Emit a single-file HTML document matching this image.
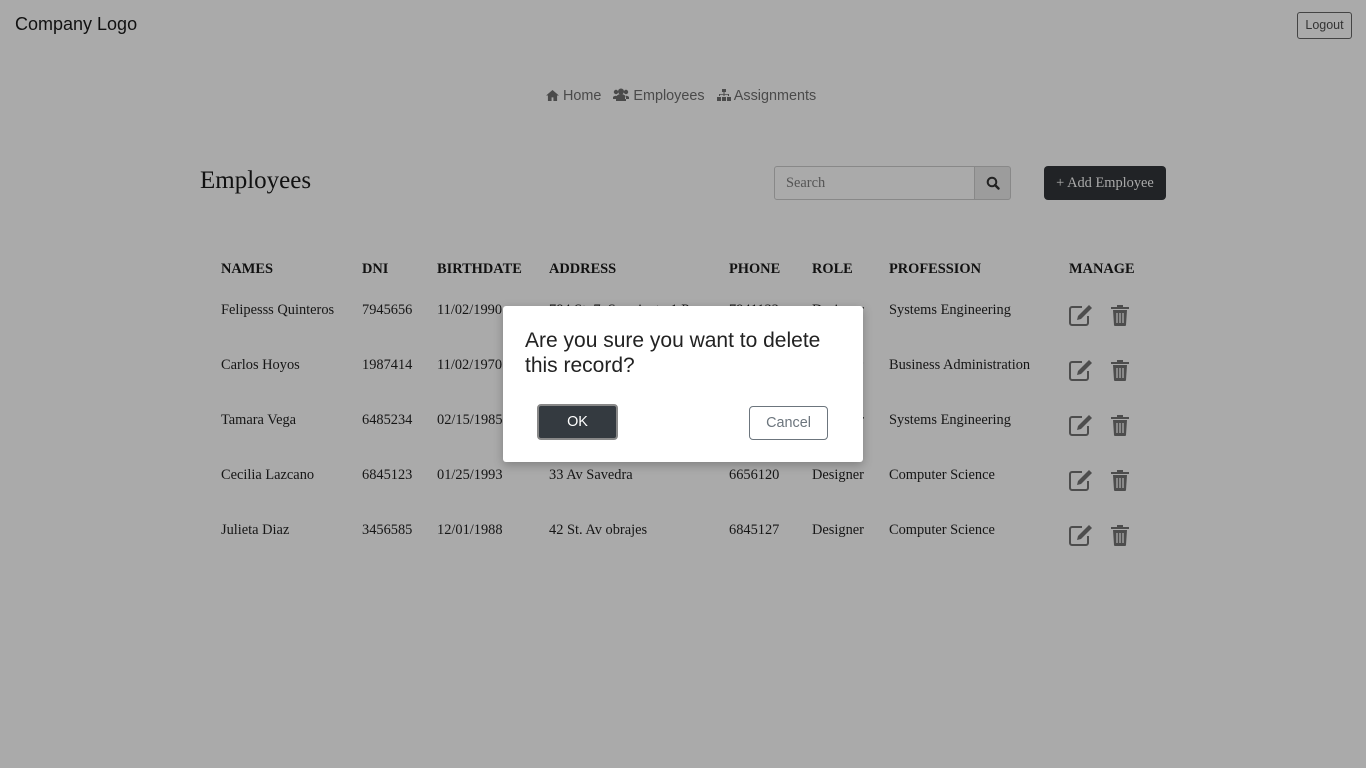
<!DOCTYPE html>
<html><head><style>
body{margin:0;width:1366px;height:768px;background:#aaaaaa;font-family:"Liberation Serif",serif;color:#161616;position:relative;overflow:hidden}
.a{position:absolute;white-space:nowrap}
.logo{left:15px;top:14px;font:18px "Liberation Sans",sans-serif;color:#111}
.logout{left:1297px;top:12px;width:53px;height:25px;border:1px solid #444;border-radius:3px;font:12.5px "Liberation Sans",sans-serif;color:#333;text-align:center;line-height:25px}
.nav{top:88px;font:14.4px "Liberation Sans",sans-serif;color:#4a4a4a}
.nav span{margin-right:12px}
h1{position:absolute;left:200px;top:167px;margin:0;font-weight:normal;font-size:25px;color:#111}
.search{left:774px;top:166px;border:1px solid #888;border-radius:3px 0 0 3px;font-size:14.4px;color:#555;line-height:33px;padding-left:11px;box-sizing:border-box;width:201px;height:34px}
.sbtn{left:974px;top:166px;width:37px;height:34px;background:#9c9c9c;border:1px solid #888;box-sizing:border-box;border-radius:0 3px 3px 0}
.add{left:1044px;top:166px;width:122px;height:34px;background:#212326;border-radius:4px;color:#aaa;font-size:14.4px;text-align:center;line-height:34px}
.h{top:261px;font-weight:bold;font-size:14.4px;color:#111}
.c{font-size:14.4px}
.modal{left:503px;top:306px;width:360px;height:156px;background:#fff;border-radius:3px;box-shadow:0 3px 10px rgba(0,0,0,.25)}
.q{left:22px;top:22px;font:21px/25px "Liberation Sans",sans-serif;color:#222;white-space:normal;width:315px}
.ok{left:34px;top:98px;width:81px;height:36px;background:#343a40;border:2px solid #888;border-radius:4px;box-sizing:border-box;color:#fff;font:14.4px "Liberation Sans",sans-serif;text-align:center;line-height:33px}
.cancel{left:246px;top:100px;width:79px;height:34px;border:1px solid #6c757d;border-radius:4px;box-sizing:border-box;color:#6c757d;font:14.4px "Liberation Sans",sans-serif;text-align:center;line-height:33px}
</style></head><body>
<div class="a logo">Company Logo</div>
<div class="a logout">Logout</div>
<div class="a nav" style="left:546px">
<span><svg width="13" height="11" viewBox="0 0 14 12" style="vertical-align:-1px"><path d="M7 0L0 6h2v6h4V8h2v4h4V6h2z" fill="#4a4a4a"/></svg> Home</span><span><svg width="16" height="13" viewBox="0 0 16 13" style="vertical-align:-1px"><circle cx="8" cy="3.5" r="3" fill="#4a4a4a"/><circle cx="3" cy="4" r="2.2" fill="#4a4a4a"/><circle cx="13" cy="4" r="2.2" fill="#4a4a4a"/><path d="M3 13v-3a5 4 0 0 1 10 0v3z M0 11v-2a3 2 0 0 1 4-1v3z M16 11v-2a3 2 0 0 0-4-1v3z" fill="#4a4a4a"/></svg> Employees</span><span><svg width="14" height="12" viewBox="0 0 14 12" style="vertical-align:-1px"><path d="M5 0h4v3H5zM6.5 3h1v2H12v2h-1V5.8H7.5V7h-1V5.8H3V7H2V5H6.5z M0 8h4v4H0zM5 8h4v4H5zM10 8h4v4h-4z" fill="#4a4a4a"/></svg> Assignments</span></div>
<h1>Employees</h1>
<div class="a search">Search</div>
<div class="a sbtn"><svg width="14" height="14" viewBox="0 0 14 14" style="position:absolute;left:11px;top:9px"><circle cx="6" cy="6" r="4.3" stroke="#222" stroke-width="2" fill="none"/><path d="M9 9l3.5 3.5" stroke="#222" stroke-width="2.4" stroke-linecap="round"/></svg></div>
<div class="a add">+ Add Employee</div>
<div class="a h" style="left:221px">NAMES</div><div class="a h" style="left:362px">DNI</div><div class="a h" style="left:437px">BIRTHDATE</div><div class="a h" style="left:549px">ADDRESS</div><div class="a h" style="left:729px">PHONE</div><div class="a h" style="left:812px">ROLE</div><div class="a h" style="left:889px">PROFESSION</div><div class="a h" style="left:1069px">MANAGE</div>
<div id="rows"></div>
<div class="a modal"><div class="a q">Are you sure you want to delete this record?</div><div class="a ok">OK</div><div class="a cancel">Cancel</div></div>
<script>
var d=[["Felipesss Quinteros","7945656","11/02/1990","784 St. 7, Sarmiento 1 P","7941133","Designer","Systems Engineering"],["Carlos Hoyos","1987414","11/02/1970","12 St. Av Colon","6541221","Manager","Business Administration"],["Tamara Vega","6485234","02/15/1985","45 Av Velez Sarsfield","6521453","Designer","Systems Engineering"],["Cecilia Lazcano","6845123","01/25/1993","33 Av Savedra","6656120","Designer","Computer Science"],["Julieta Diaz","3456585","12/01/1988","42 St. Av obrajes","6845127","Designer","Computer Science"]];
var xs=[221,362,437,549,729,812,889],h="";
var edit='<svg width="26" height="22" viewBox="0 0 26 22"><path d="M14 3H4a2 2 0 0 0-2 2v14a2 2 0 0 0 2 2h14a2 2 0 0 0 2-2v-7" stroke="#4d4d4d" stroke-width="2" fill="none"/><path d="M21 1l3 3-11 11-4 1 1-4z" fill="#4d4d4d"/></svg>';
var tr='<svg width="20" height="22" viewBox="0 0 20 22"><path d="M1 3h18v2H1zM7 1h6v2H7zM3 6h14l-1 15a1 1 0 0 1-1 1H5a1 1 0 0 1-1-1z" fill="#4d4d4d"/><path d="M7 9v10M10 9v10M13 9v10" stroke="#aaa" stroke-width="1.3"/></svg>';
d.forEach(function(r,i){var y=302+55*i;r.forEach(function(t,j){h+='<div class="a c" style="left:'+xs[j]+'px;top:'+y+'px">'+t+'</div>'});h+='<div class="a" style="left:1068px;top:'+(y+2)+'px">'+edit+'</div><div class="a" style="left:1110px;top:'+(y+2)+'px">'+tr+'</div>'});
document.getElementById("rows").innerHTML=h;
</script>
</body></html>
